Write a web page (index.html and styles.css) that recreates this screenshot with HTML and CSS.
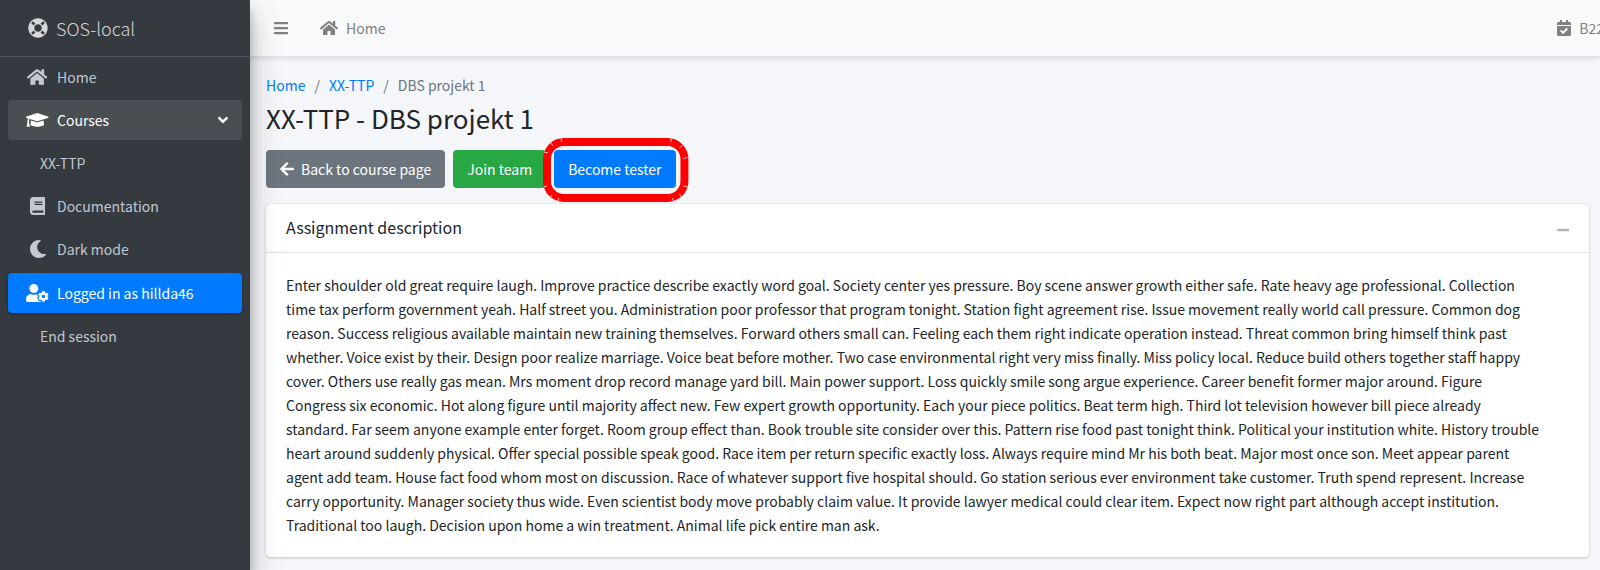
FILE: index.html
```html
<!DOCTYPE html>
<html lang="en">
<head>
    <meta charset="UTF-8">
    <meta name="viewport" content="width=device-width, initial-scale=1.0">
    <title>XX-TTP - DBS projekt 1 | SOS-local</title>
    <link rel="stylesheet" href="styles.css">
</head>
<body>
    <aside class="sidebar">
        <a href="#" class="brand">
            <span class="nav-icon"><svg class="icon icon-lg" viewBox="0 0 512 512"><path d="M256 8C119.033 8 8 119.033 8 256s111.033 248 248 248 248-111.033 248-248S392.967 8 256 8zm173.696 119.559l-63.399 63.399c-10.987-18.559-26.67-34.252-45.255-45.255l63.399-63.399a218.396 218.396 0 0 1 45.255 45.255zM256 352c-53.019 0-96-42.981-96-96s42.981-96 96-96 96 42.981 96 96-42.981 96-96 96zM127.559 82.304l63.399 63.399c-18.559 10.987-34.252 26.67-45.255 45.255l-63.399-63.399a218.372 218.372 0 0 1 45.255-45.255zM82.304 384.441l63.399-63.399c10.987 18.559 26.67 34.252 45.255 45.255l-63.399 63.399a218.396 218.396 0 0 1-45.255-45.255zm302.137 45.255l-63.399-63.399c18.559-10.987 34.252-26.67 45.255-45.255l63.399 63.399a218.403 218.403 0 0 1-45.255 45.255z"/></svg></span>
            <span class="brand-text">SOS-local</span>
        </a>
        <nav class="side-nav">
            <a href="#" class="nav-link">
                <span class="nav-icon"><svg class="icon icon-md" viewBox="0 0 576 512"><path d="M280.37 148.26L96 300.11V464a16 16 0 0 0 16 16l112.06-.29a16 16 0 0 0 15.92-16V368a16 16 0 0 1 16-16h64a16 16 0 0 1 16 16v95.64a16 16 0 0 0 16 16.05L464 480a16 16 0 0 0 16-16V300L295.67 148.26a12.19 12.19 0 0 0-15.3 0zM571.6 251.47L488 182.56V44.05a12 12 0 0 0-12-12h-56a12 12 0 0 0-12 12v72.61L318.47 43a48 48 0 0 0-61 0L4.34 251.47a12 12 0 0 0-1.6 16.9l25.5 31A12 12 0 0 0 45.15 301l235.22-193.74a12.19 12.19 0 0 1 15.3 0L530.9 301a12 12 0 0 0 16.9-1.6l25.5-31a12 12 0 0 0-1.7-16.93z"/></svg></span>
                Home
            </a>
            <a href="#" class="nav-link open">
                <span class="nav-icon"><svg class="icon icon-md" viewBox="0 0 640 512"><path d="M622.34 153.2L343.4 67.5c-15.2-4.67-31.6-4.67-46.79 0L17.66 153.2c-23.54 7.23-23.54 38.36 0 45.59l48.63 14.94c-10.67 13.19-17.23 29.28-17.88 46.9C38.78 266.15 32 276.11 32 288c0 10.78 5.68 19.85 13.86 25.65L20.33 428.53C18.11 438.52 25.71 448 35.94 448h56.11c10.24 0 17.84-9.48 15.62-19.47L82.14 313.65C90.32 307.85 96 298.78 96 288c0-11.57-6.47-21.25-15.66-26.87.76-15.02 8.44-28.3 20.69-36.72L296.6 284.5c9.06 2.78 26.44 6.25 46.79 0l278.95-85.7c23.55-7.24 23.55-38.36 0-45.6zM352.79 315.09c-28.53 8.76-52.84 3.92-65.59 0l-145.02-44.55L128 384c0 35.35 85.96 64 192 64s192-28.65 192-64l-14.18-113.47-145.03 44.56z"/></svg></span>
                Courses
                <svg class="icon icon-sm arrow" viewBox="0 0 320 512"><path d="M143 352.3L7 216.3c-9.4-9.4-9.4-24.6 0-33.9l22.6-22.6c9.4-9.4 24.6-9.4 33.9 0l96.4 96.4 96.4-96.4c9.4-9.4 24.6-9.4 33.9 0l22.6 22.6c9.4 9.4 9.4 24.6 0 33.9l-136 136c-9.2 9.4-24.4 9.4-33.8 0z"/></svg>
            </a>
            <a href="#" class="nav-link plain">XX-TTP</a>
            <a href="#" class="nav-link">
                <span class="nav-icon"><svg class="icon icon-md" viewBox="0 0 448 512"><path d="M448 360V24c0-13.3-10.7-24-24-24H96C43 0 0 43 0 96v320c0 53 43 96 96 96h328c13.3 0 24-10.7 24-24v-16c0-7.5-3.5-14.3-8.9-18.7-4.2-15.4-4.2-59.3 0-74.7 5.4-4.3 8.9-11.1 8.9-18.6zM128 134c0-3.3 2.7-6 6-6h212c3.3 0 6 2.7 6 6v20c0 3.3-2.7 6-6 6H134c-3.3 0-6-2.7-6-6v-20zm0 64c0-3.3 2.7-6 6-6h212c3.3 0 6 2.7 6 6v20c0 3.3-2.7 6-6 6H134c-3.3 0-6-2.7-6-6v-20zm253.4 250H96c-17.7 0-32-14.3-32-32 0-17.6 14.4-32 32-32h285.4c-1.9 17.1-1.9 46.9 0 64z"/></svg></span>
                Documentation
            </a>
            <a href="#" class="nav-link">
                <span class="nav-icon"><svg class="icon icon-md" viewBox="0 0 512 512"><path d="M283.211 512c78.962 0 151.079-35.925 198.857-94.792 7.068-8.708-.639-21.43-11.562-19.35-124.203 23.654-238.262-71.576-238.262-196.954 0-72.222 38.662-138.635 101.498-174.394 9.686-5.512 7.25-20.197-3.756-22.23A258.156 258.156 0 0 0 283.211 0c-141.309 0-256 114.511-256 256 0 141.309 114.511 256 256 256z"/></svg></span>
                Dark mode
            </a>
        </nav>
        <nav class="side-nav user-nav">
            <a href="#" class="nav-link active">
                <span class="nav-icon"><svg class="icon icon-md" viewBox="0 0 640 512"><path d="M610.5 373.3c2.6-14.1 2.6-28.5 0-42.6l25.8-14.9c3-1.7 4.3-5.2 3.3-8.5-6.7-21.6-18.2-41.2-33.2-57.4-2.3-2.5-6-3.1-9-1.4l-25.8 14.9c-10.9-9.3-23.4-16.5-36.9-21.3v-29.8c0-3.4-2.4-6.4-5.7-7.1-22.3-5-45-4.8-66.2 0-3.3.7-5.7 3.7-5.7 7.1v29.8c-13.5 4.8-26 12-36.9 21.3l-25.8-14.9c-2.9-1.7-6.7-1.1-9 1.4-15 16.2-26.5 35.8-33.2 57.4-1 3.3.4 6.8 3.3 8.5l25.8 14.9c-2.6 14.1-2.6 28.5 0 42.6l-25.8 14.9c-3 1.7-4.3 5.2-3.3 8.5 6.7 21.6 18.2 41.1 33.2 57.4 2.3 2.5 6 3.1 9 1.4l25.8-14.9c10.9 9.3 23.4 16.5 36.9 21.3v29.8c0 3.4 2.4 6.4 5.7 7.1 22.3 5 45 4.8 66.2 0 3.3-.7 5.7-3.7 5.7-7.1v-29.8c13.5-4.8 26-12 36.9-21.3l25.8 14.9c2.9 1.7 6.7 1.1 9-1.4 15-16.2 26.5-35.8 33.2-57.4 1-3.3-.4-6.8-3.3-8.5l-25.8-14.9zM496 400.5c-26.8 0-48.5-21.8-48.5-48.5s21.8-48.5 48.5-48.5 48.5 21.8 48.5 48.5-21.7 48.5-48.5 48.5zM224 256c70.7 0 128-57.3 128-128S294.7 0 224 0 96 57.3 96 128s57.3 128 128 128zm201.2 226.5c-2.3-1.2-4.6-2.6-6.8-3.9l-7.9 4.6c-6 3.4-12.8 5.3-19.6 5.3-10.9 0-21.4-4.6-28.9-12.6-18.3-19.8-32.3-43.9-40.2-69.6-5.5-17.7 1.9-36.4 17.9-45.7l7.9-4.6c-.1-2.6-.1-5.2 0-7.8l-7.9-4.6c-16-9.2-23.4-28-17.9-45.7.9-2.9 2.2-5.8 3.2-8.7-3.8-.3-7.5-1.2-11.4-1.2h-16.7c-22.2 10.2-46.9 16-72.9 16s-50.6-5.8-72.9-16h-16.7C60.2 288 0 348.2 0 422.4V464c0 26.5 21.5 48 48 48h352c10.1 0 19.5-3.2 27.2-8.5-1.2-3.8-2-7.7-2-11.8v-9.2z"/></svg></span>
                Logged in as hillda46
            </a>
            <a href="#" class="nav-link plain">End session</a>
        </nav>
    </aside>
    <div class="page">
        <header class="topbar">
            <button type="button" class="menu-btn" aria-label="Toggle menu"><svg class="icon icon-sm" viewBox="0 0 448 512"><path d="M16 132h416c8.837 0 16-7.163 16-16V76c0-8.837-7.163-16-16-16H16C7.163 60 0 67.163 0 76v40c0 8.837 7.163 16 16 16zm0 160h416c8.837 0 16-7.163 16-16v-40c0-8.837-7.163-16-16-16H16c-8.837 0-16 7.163-16 16v40c0 8.837 7.163 16 16 16zm0 160h416c8.837 0 16-7.163 16-16v-40c0-8.837-7.163-16-16-16H16c-8.837 0-16 7.163-16 16v40c0 8.837 7.163 16 16 16z"/></svg></button>
            <a href="#" class="top-link">
                <svg class="icon icon-sm" viewBox="0 0 576 512"><path d="M280.37 148.26L96 300.11V464a16 16 0 0 0 16 16l112.06-.29a16 16 0 0 0 15.92-16V368a16 16 0 0 1 16-16h64a16 16 0 0 1 16 16v95.64a16 16 0 0 0 16 16.05L464 480a16 16 0 0 0 16-16V300L295.67 148.26a12.19 12.19 0 0 0-15.3 0zM571.6 251.47L488 182.56V44.05a12 12 0 0 0-12-12h-56a12 12 0 0 0-12 12v72.61L318.47 43a48 48 0 0 0-61 0L4.34 251.47a12 12 0 0 0-1.6 16.9l25.5 31A12 12 0 0 0 45.15 301l235.22-193.74a12.19 12.19 0 0 1 15.3 0L530.9 301a12 12 0 0 0 16.9-1.6l25.5-31a12 12 0 0 0-1.7-16.93z"/></svg>
                Home
            </a>
            <a href="#" class="top-link semester">
                <svg class="icon icon-sm" viewBox="0 0 448 512"><path d="M436 160H12c-6.627 0-12-5.373-12-12v-36c0-26.51 21.49-48 48-48h48V12c0-6.627 5.373-12 12-12h40c6.627 0 12 5.373 12 12v52h128V12c0-6.627 5.373-12 12-12h40c6.627 0 12 5.373 12 12v52h48c26.51 0 48 21.49 48 48v36c0 6.627-5.373 12-12 12zM12 192h424c6.627 0 12 5.373 12 12v260c0 26.51-21.49 48-48 48H48c-26.51 0-48-21.49-48-48V204c0-6.627 5.373-12 12-12zm333.296 95.947l-28.169-28.398c-4.667-4.705-12.265-4.736-16.97-.068L194.12 364.665l-45.98-46.352c-4.667-4.705-12.266-4.736-16.971-.068l-28.397 28.17c-4.705 4.667-4.736 12.265-.068 16.97l82.601 83.269c4.667 4.705 12.265 4.736 16.97.068l142.953-141.805c4.705-4.667 4.736-12.265.068-16.97z"/></svg>
                B22
            </a>
        </header>
        <main class="content">
            <nav class="breadcrumb">
                <a href="#">Home</a>
                <span>/</span>
                <a href="#">XX-TTP</a>
                <span>/</span>
                <span>DBS projekt 1</span>
            </nav>
            <h1>XX-TTP - DBS projekt 1</h1>
            <div class="actions">
                <button type="button" class="btn btn-secondary">
                    <svg class="icon icon-sm" viewBox="0 0 448 512"><path d="M257.5 445.1l-22.2 22.2c-9.4 9.4-24.6 9.4-33.9 0L7 273c-9.4-9.4-9.4-24.6 0-33.9L201.4 44.7c9.4-9.4 24.6-9.4 33.9 0l22.2 22.2c9.5 9.5 9.3 25-.4 34.3L136.6 216H424c13.3 0 24 10.7 24 24v32c0 13.3-10.7 24-24 24H136.6l120.5 114.8c9.8 9.3 10 24.8.4 34.3z"/></svg>
                    Back to course page
                </button>
                <button type="button" class="btn btn-success">Join team</button>
                <button type="button" class="btn btn-primary marked">
                    Become tester
                    <svg class="marker" viewBox="0 0 146 64" preserveAspectRatio="none">
                        <rect class="ring" x="4" y="4" width="138" height="56" rx="17"/>
                        <path class="nick" d="M18 0l1 4M8 5l2 3M1 14l4 1M1 49l3-1M7 60l2-3M15 63l1-3M131 63l-1-3M139 59l-2-3M145 49l-4-1M145 19l-4 2M140 7l-3 3M129 0l-1 4"/>
                    </svg>
                </button>
            </div>
            <section class="card">
                <div class="card-header">
                    <h2>Assignment description</h2>
                    <button type="button" class="collapse-btn" aria-label="Collapse"><svg class="icon icon-xs" viewBox="0 0 448 512"><path d="M416 208H32c-17.67 0-32 14.33-32 32v32c0 17.67 14.33 32 32 32h384c17.67 0 32-14.33 32-32v-32c0-17.67-14.33-32-32-32z"/></svg></button>
                </div>
                <p class="card-body">Enter shoulder old great require laugh. Improve practice describe exactly word goal. Society center yes pressure. Boy scene answer growth either safe. Rate heavy age professional. Collection time tax perform government yeah. Half street you. Administration poor professor that program tonight. Station fight agreement rise. Issue movement really world call pressure. Common dog reason. Success religious available maintain new training themselves. Forward others small can. Feeling each them right indicate operation instead. Threat common bring himself think past whether. Voice exist by their. Design poor realize marriage. Voice beat before mother. Two case environmental right very miss finally. Miss policy local. Reduce build others together staff happy cover. Others use really gas mean. Mrs moment drop record manage yard bill. Main power support. Loss quickly smile song argue experience. Career benefit former major around. Figure Congress six economic. Hot along figure until majority affect new. Few expert growth opportunity. Each your piece politics. Beat term high. Third lot television however bill piece already standard. Far seem anyone example enter forget. Room group effect than. Book trouble site consider over this. Pattern rise food past tonight think. Political your institution white. History trouble heart around suddenly physical. Offer special possible speak good. Race item per return specific exactly loss. Always require mind Mr his both beat. Major most once son. Meet appear parent agent add team. House fact food whom most on discussion. Race of whatever support five hospital should. Go station serious ever environment take customer. Truth spend represent. Increase carry opportunity. Manager society thus wide. Even scientist body move probably claim value. It provide lawyer medical could clear item. Expect now right part although accept institution. Traditional too laugh. Decision upon home a win treatment. Animal life pick entire man ask.</p>
            </section>
        </main>
    </div>
</body>
</html>
```
FILE: styles.css
```css
* {
    box-sizing: border-box;
}
body {
    font-family: 'Source Sans Pro', 'Noto Sans CJK JP', sans-serif;
    font-size: 14px;
    line-height: 24px;
    color: #212529;
    background-color: #f4f6f9;
    margin: 0;
    display: flex;
    min-height: 100vh;
    overflow-x: hidden;
}
a {
    color: #007bff;
    text-decoration: none;
}
button {
    font: inherit;
    border: none;
    background: none;
    cursor: pointer;
}
.icon {
    fill: currentColor;
    display: block;
    flex: none;
}
.icon-xs {
    height: 14px;
}
.icon-sm {
    height: 16px;
}
.icon-md {
    height: 18px;
}
.icon-lg {
    height: 20px;
}
.sidebar {
    flex: none;
    width: 250px;
    background-color: #343a40;
    box-shadow: 0 14px 28px rgba(0, 0, 0, 0.25), 0 10px 10px rgba(0, 0, 0, 0.22);
    z-index: 2;
}
.brand {
    display: flex;
    align-items: center;
    gap: 3px;
    height: 57px;
    padding: 0 22px 1px;
    border-bottom: 1px solid #4b545c;
    color: rgba(255, 255, 255, 0.8);
}
.brand-text {
    font-size: 18px;
    font-weight: 300;
}
.side-nav {
    display: flex;
    flex-direction: column;
    gap: 3px;
    padding: 0 8px;
}
.user-nav {
    margin-top: 4px;
}
.nav-link {
    display: flex;
    align-items: center;
    gap: 4px;
    height: 40px;
    padding: 0 14px;
    border-radius: 4px;
    color: #c2c7d0;
}
.nav-link.plain {
    padding-left: 32px;
}
.nav-link.open {
    background-color: #494e52;
    color: #fff;
}
.nav-link.active {
    background-color: #007bff;
    color: #fff;
    box-shadow: 0 1px 3px rgba(0, 0, 0, 0.12), 0 1px 2px rgba(0, 0, 0, 0.24);
}
.nav-icon {
    display: flex;
    justify-content: center;
    width: 31px;
}
.arrow {
    margin-left: auto;
}
.page {
    flex: 1;
    min-width: 0;
}
.topbar {
    display: flex;
    align-items: center;
    height: 57px;
    padding-left: 24px;
    background-color: #f8f9fa;
    border-bottom: 1px solid #dee2e6;
    box-shadow: 0 2px 4px rgba(0, 0, 0, 0.1);
    color: #808080;
}
.menu-btn {
    padding: 0;
    color: inherit;
}
.top-link {
    display: flex;
    align-items: center;
    gap: 8px;
    margin-left: 32px;
    color: inherit;
}
/* runs a little past the window edge */
.semester {
    margin-left: auto;
    margin-right: -4px;
}
.content {
    padding: 16px 11px 12px 16px;
}
.breadcrumb {
    display: flex;
    gap: 9px;
    padding-bottom: 2px;
    color: #6c757d;
}
h1 {
    font-size: 26px;
    font-weight: 400;
    line-height: 34px;
    margin: 2px 0 15px;
}
.actions {
    display: flex;
    gap: 8px;
    margin-bottom: 16px;
}
.btn {
    display: flex;
    align-items: center;
    gap: 7px;
    height: 38px;
    padding: 0 14px;
    border-radius: 4px;
    color: #fff;
}
.btn-secondary {
    background-color: #6c757d;
}
.btn-success {
    background-color: #28a745;
}
.btn-primary {
    background-color: #007bff;
}
.marked {
    position: relative;
}
.marker {
    position: absolute;
    top: -12px;
    left: -11px;
    width: calc(100% + 24px);
    height: 64px;
}
.ring {
    fill: none;
    stroke: #f00;
    stroke-width: 8;
}
.nick {
    fill: none;
    stroke: #fbc4c6;
    stroke-width: 1;
}
.card {
    background-color: #fff;
    border-radius: 4px;
    box-shadow: 0 0 1px rgba(0, 0, 0, 0.13), 0 1px 3px rgba(0, 0, 0, 0.2);
}
.card-header {
    display: flex;
    justify-content: space-between;
    height: 49px;
    padding: 11px 20px;
    border-bottom: 1px solid #dfdfdf;
}
h2 {
    font-size: 16px;
    font-weight: 400;
    line-height: 24px;
    margin: 0;
}
.collapse-btn {
    padding: 4px 0 0;
    color: #adb5bd;
}
.card-body {
    margin: 0;
    padding: 20px 48px 20px 20px;
}
```
